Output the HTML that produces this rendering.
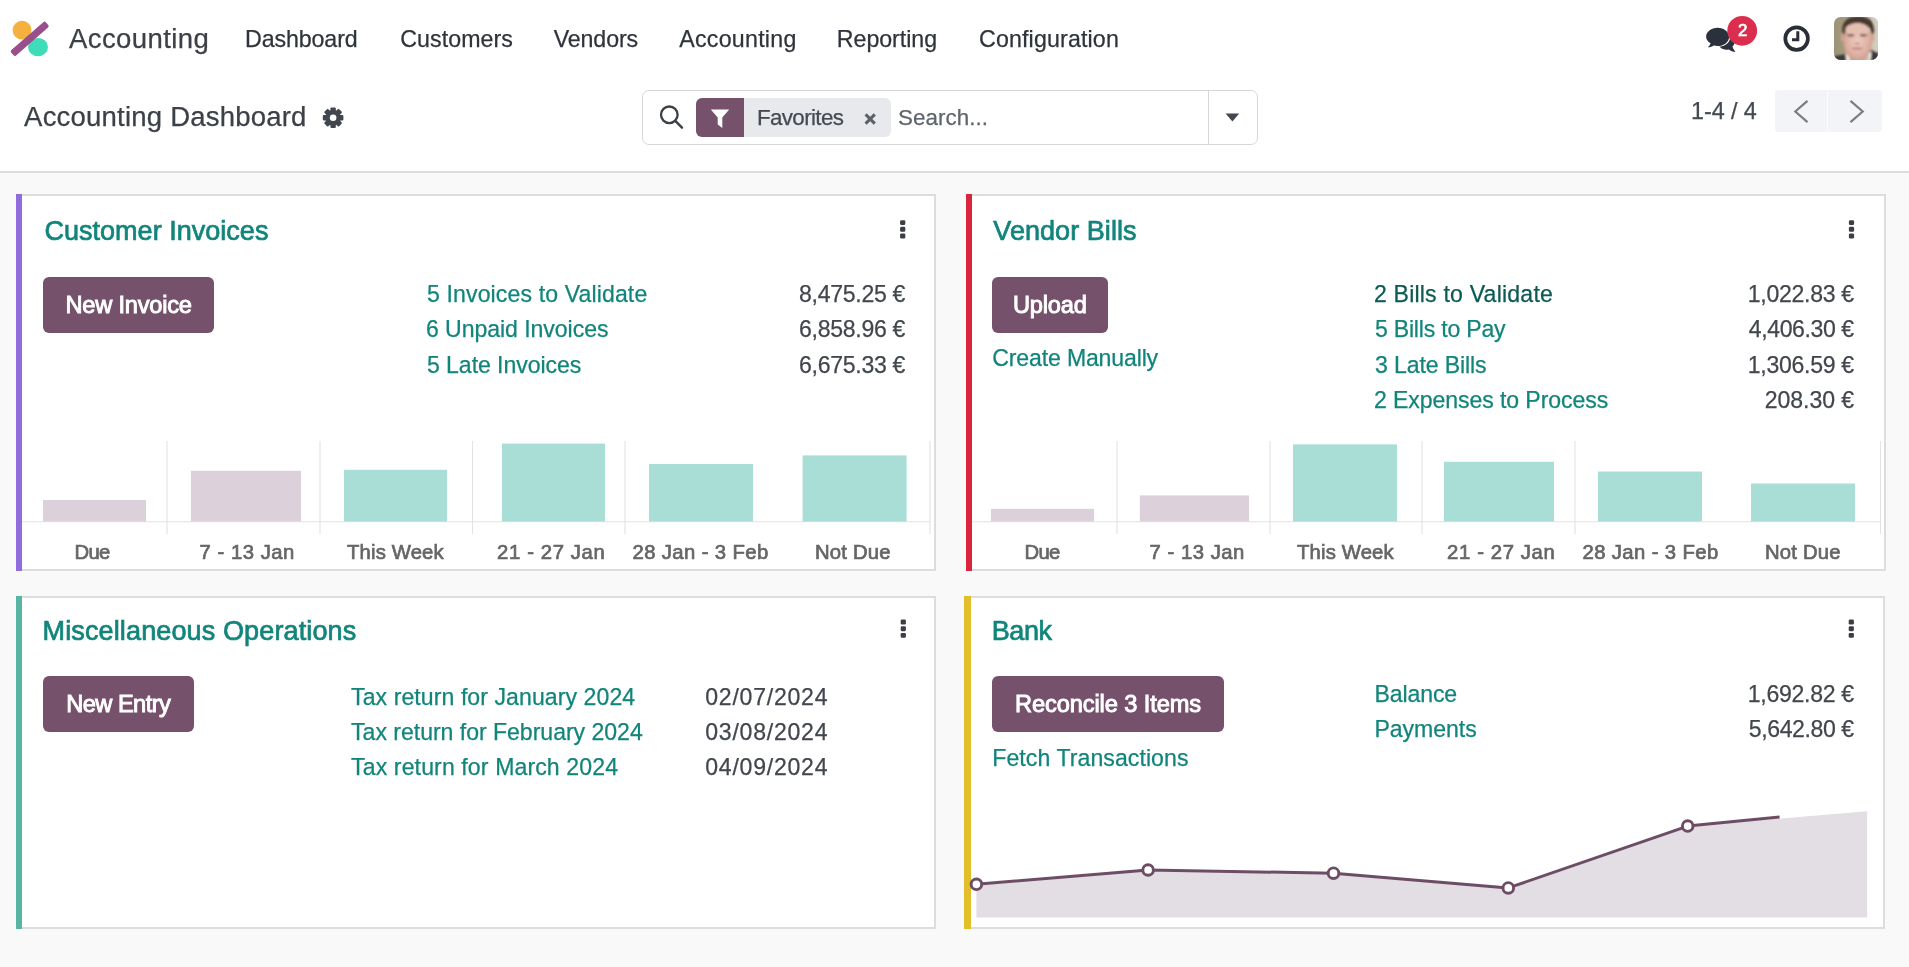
<!DOCTYPE html>
<html lang="en"><head><meta charset="utf-8"><title>Odoo - Accounting Dashboard</title>
<style>
html,body{margin:0;padding:0;}
body{width:1909px;height:967px;overflow:hidden;position:relative;background:#f9f9fa;font-family:"Liberation Sans",sans-serif;}
.abs{position:absolute;}
.t{position:absolute;white-space:nowrap;line-height:0;}
header.top{position:absolute;left:0;top:0;width:1909px;height:171px;background:#fff;border-bottom:2px solid #dcdddf;}
.card{position:absolute;background:#fff;border:2px solid #dcdddf;border-left-width:6px;box-sizing:border-box;}
.card .bar{position:absolute;left:-6px;top:-2px;bottom:-2px;width:6px;display:block;}
.btn{position:absolute;background:#75516c;border-radius:6px;}
.search{position:absolute;left:642px;top:90px;width:616px;height:55px;box-sizing:border-box;border:1.5px solid #d5d7da;border-radius:7px;background:#fff;}
.search .sep{position:absolute;left:564.5px;top:0;width:1.5px;height:100%;background:#d5d7da;}
.facet{position:absolute;left:696px;top:98px;width:195px;height:39px;border-radius:6px;background:#e7e9ed;overflow:hidden;}
.facet i{position:absolute;left:0;top:0;width:48px;height:39px;background:#75516c;display:block;}
.pager{position:absolute;left:1775px;top:90px;width:107px;height:42px;background:#f3f4f7;border-radius:4px;}
.pager b{position:absolute;left:51.5px;top:0;width:1.5px;height:42px;background:#fafbfc;}
svg{position:absolute;overflow:visible;}
.txt{position:absolute;left:0;top:0;width:1909px;height:967px;will-change:transform;}

</style></head>
<body>
<header class="top"></header>

<!-- control panel -->
<div class="search"><div class="sep"></div></div>
<div class="facet"><i></i></div>
<div class="pager"><b></b></div>

<!-- cards -->
<section class="card" style="left:16px;top:194px;width:920px;height:377px;"><i class="bar" style="background:#916cdc"></i></section>
<section class="card" style="left:966px;top:194px;width:920px;height:377px;"><i class="bar" style="background:#d9263e"></i></section>
<section class="card" style="left:16px;top:596px;width:920px;height:333px;"><i class="bar" style="background:#57b5a3"></i></section>
<section class="card" style="left:964px;top:596px;width:921px;height:333px;border-left-width:7px;"><i class="bar" style="background:#e2be2b;left:-7px;width:6.6px"></i></section>

<!-- buttons -->
<div class="btn" style="left:43px;top:277px;width:171px;height:56px;"></div>
<div class="btn" style="left:992px;top:277px;width:116px;height:56px;"></div>
<div class="btn" style="left:43px;top:676px;width:151px;height:56px;"></div>
<div class="btn" style="left:992px;top:676px;width:232px;height:56px;"></div>

<svg width="1909" height="967" viewBox="0 0 1909 967" style="left:0;top:0;">
  <!-- app logo -->
  <g>
    <circle cx="22" cy="30.2" r="9.4" fill="#f5b13f"/>
    <ellipse cx="38" cy="47.1" rx="10" ry="9.2" fill="#3fdcb9"/>
    <rect x="-23" y="-3.600" width="46" height="7.200" rx="1.800" fill="#9a4f8d" transform="translate(29.700 38.850) rotate(-41.200)"/>
  </g>
  <!-- messaging icon -->
  <g fill="#2a303c">
    <path d="M1718 41.5c0-4.2 3.8-7.2 8.2-7.2s8.6 3 8.600 7.200c0 2-.9 3.700-2.300 5 .5 1.900 1.500 3.800 3 5.300-2.600 0-4.900-1-6.600-2.400-.9.200-1.800.3-2.700.3-4.400 0-8.200-3.200-8.200-8.200z"/>
    <path d="M1717.600 27.800c6.300 0 11.500 4.100 11.500 9.100s-5.200 9.100-11.500 9.100c-1.300 0-2.600-.2-3.800-.5-1.600 1.100-3.600 1.800-5.900 1.800 1.300-1.200 2.200-2.600 2.700-4.100-2.800-1.700-4.500-4.100-4.500-6.300 0-5 5.200-9.100 11.500-9.100z" stroke="#fff" stroke-width="2.200" paint-order="stroke"/>
  </g>
  <circle cx="1742.2" cy="30.8" r="14.9" fill="#db2e4e"/>
  <!-- clock -->
  <circle cx="1796.600" cy="38.600" r="11.300" fill="none" stroke="#2a2e37" stroke-width="3.700"/>
  <path d="M1797.800 31.300v8.500h-5.800" fill="none" stroke="#2a2e37" stroke-width="3"/>
  <!-- avatar -->
  <defs>
    <clipPath id="av"><rect x="1834" y="17" width="44" height="43" rx="6.500"/></clipPath>
    <filter id="bl" x="-20%" y="-20%" width="140%" height="140%"><feGaussianBlur stdDeviation="0.900"/></filter>
    <radialGradient id="skin" cx=".5" cy=".45" r=".6"><stop offset="0" stop-color="#ebcbc0"/><stop offset=".6" stop-color="#dfb3a5"/><stop offset="1" stop-color="#c99684"/></radialGradient>
    <linearGradient id="avbg" x1="0" x2="1" y1="0" y2="0">
      <stop offset="0" stop-color="#9a9173"/><stop offset=".45" stop-color="#a9a084"/><stop offset=".8" stop-color="#cfc9b4"/><stop offset="1" stop-color="#b9b196"/>
    </linearGradient>
  </defs>
  <g clip-path="url(#av)">
    <rect x="1830" y="13" width="52" height="51" fill="url(#avbg)"/>
    <g filter="url(#bl)">
      <rect x="1873.500" y="14" width="6" height="40" fill="#d3cfbf"/>
      <path d="M1833 61v-4.500l12.500-2.500 2 7zM1879 61v-8l-8.500-3.500-2 11.500z" fill="#3a3a3b"/>
      <path d="M1845.500 54.500l3.500-3 1 9.500h-3.500zM1868.500 61l.5-10 2.500 1.500-1 8.500z" fill="#f1ece8"/>
      <path d="M1842.500 32c-1.500-9 4-15.500 15-15.800 11-.3 17.500 5 17 14.800l-1.500 8-3-11h-24l-2 9z" fill="#49382f"/>
      <ellipse cx="1842.700" cy="37.500" rx="1.800" ry="4" fill="#d2a292"/>
      <ellipse cx="1872.800" cy="37.500" rx="1.600" ry="4" fill="#d2a292"/>
      <ellipse cx="1857.800" cy="42.300" rx="14.200" ry="19" fill="url(#skin)"/>
      <ellipse cx="1857.300" cy="29.500" rx="11.800" ry="6.500" fill="#e4c0b3"/>
      <ellipse cx="1850.800" cy="35.300" rx="3.500" ry="1.300" fill="#7b564d"/>
      <ellipse cx="1863.300" cy="35.300" rx="3.500" ry="1.300" fill="#7b564d"/>
      <ellipse cx="1857.200" cy="43.500" rx="2.600" ry="1.100" fill="#c39185"/>
      <ellipse cx="1857.300" cy="48.500" rx="5.200" ry="1.100" fill="#b67a74"/>
    </g>
  </g>

  <!-- gear -->
  <g transform="translate(333.100 117.700)" fill="#42464f">
    <g id="gt">
      <rect x="-2.700" y="-10.300" width="5.400" height="20.600" rx="1"/>
      <rect x="-2.700" y="-10.300" width="5.400" height="20.600" rx="1" transform="rotate(45)"/>
      <rect x="-2.700" y="-10.300" width="5.400" height="20.600" rx="1" transform="rotate(90)"/>
      <rect x="-2.700" y="-10.300" width="5.400" height="20.600" rx="1" transform="rotate(135)"/>
    </g>
    <circle r="7.700"/>
    <circle r="3.300" fill="#fff"/>
  </g>

  <!-- search icon -->
  <circle cx="669.300" cy="114.800" r="8.300" fill="none" stroke="#3b4047" stroke-width="2.300"/>
  <line x1="675.300" y1="120.900" x2="682" y2="127.700" stroke="#3b4047" stroke-width="2.400" stroke-linecap="round"/>
  <!-- filter funnel -->
  <path d="M710.800 109.500h18.400l-6.900 8v10.400l-4.600-3.300v-7.100z" fill="#fff"/>
  <!-- facet close x -->
  <path d="M865.600 114.400l9.200 9.200m0-9.200l-9.200 9.200" stroke="#5b6168" stroke-width="3" fill="none"/>
  <!-- dropdown caret -->
  <path d="M1225.600 113.500h13.600l-6.800 8z" fill="#42464f"/>
  <!-- pager chevrons -->
  <path d="M1807.500 100.800l-12.200 10.700 12.200 10.700" fill="none" stroke="#7a7d82" stroke-width="2.200"/>
  <path d="M1850.500 100.800l12.200 10.700-12.200 10.700" fill="none" stroke="#7a7d82" stroke-width="2.200"/>

  <!-- kebabs -->
  <defs>
    <g id="kb"><rect x="-2.600" y="-9.150" width="5.200" height="4.900" rx="1.300"/><rect x="-2.600" y="-2.450" width="5.200" height="4.900" rx="1.300"/><rect x="-2.600" y="4.250" width="5.200" height="4.900" rx="1.300"/></g>
  </defs>
  <use href="#kb" x="902.700" y="229.300" fill="#3b3e42"/>
  <use href="#kb" x="1851.500" y="229.300" fill="#3b3e42"/>
  <use href="#kb" x="903.300" y="628.700" fill="#3b3e42"/>
  <use href="#kb" x="1851.300" y="628.700" fill="#3b3e42"/>

  <!-- chart 1 (customer invoices) -->
  <g stroke="#e2e2e2" stroke-width="1.100">
    <line x1="22" y1="521.800" x2="930" y2="521.800"/>
    <line x1="167" y1="441" x2="167" y2="534"/>
    <line x1="320" y1="441" x2="320" y2="534"/>
    <line x1="472.500" y1="441" x2="472.500" y2="534"/>
    <line x1="625" y1="441" x2="625" y2="534"/>
    <line x1="930" y1="441" x2="930" y2="534"/>
  </g>
  <g fill="#dcd1da">
    <rect x="43" y="500" width="103" height="21.500"/>
    <rect x="191" y="470.800" width="110" height="50.700"/>
  </g>
  <g fill="#a9ded6">
    <rect x="344" y="469.800" width="103" height="51.700"/>
    <rect x="502" y="443.600" width="103" height="77.900"/>
    <rect x="649" y="464" width="104" height="57.500"/>
    <rect x="802.600" y="455.400" width="104" height="66.100"/>
  </g>

  <!-- chart 2 (vendor bills) -->
  <g stroke="#e2e2e2" stroke-width="1.100">
    <line x1="972" y1="521.800" x2="1880" y2="521.800"/>
    <line x1="1117" y1="441" x2="1117" y2="534"/>
    <line x1="1270" y1="441" x2="1270" y2="534"/>
    <line x1="1422" y1="441" x2="1422" y2="534"/>
    <line x1="1575" y1="441" x2="1575" y2="534"/>
    <line x1="1880.500" y1="441" x2="1880.500" y2="534"/>
  </g>
  <g fill="#dcd1da">
    <rect x="991" y="508.800" width="103" height="12.700"/>
    <rect x="1139.800" y="495.400" width="109.200" height="26.100"/>
  </g>
  <g fill="#a9ded6">
    <rect x="1293" y="444.400" width="104" height="77.100"/>
    <rect x="1444" y="461.800" width="110" height="59.700"/>
    <rect x="1598" y="471.500" width="104" height="50"/>
    <rect x="1751" y="483.500" width="104" height="38"/>
  </g>

  <!-- bank line chart -->
  <path d="M976.400 884.300L1148.100 870 1333.500 873.200 1508.300 887.900 1687.700 826.100 1867.100 811.300V917.500H976.400z" fill="#e3dee4"/>
  <path d="M976.400 884.300L1148.100 870 1333.500 873.200 1508.300 887.900 1687.700 826.100 1779.600 816.900" fill="none" stroke="#6d4d66" stroke-width="3" stroke-linejoin="round"/>
  <g fill="#fff" stroke="#6d4d66" stroke-width="2.900">
    <circle cx="976.400" cy="884.300" r="5.300"/>
    <circle cx="1148.100" cy="870" r="5.300"/>
    <circle cx="1333.500" cy="873.200" r="5.300"/>
    <circle cx="1508.300" cy="887.900" r="5.300"/>
    <circle cx="1687.700" cy="826.100" r="5.300"/>
  </g>
</svg>

<div class="txt">
<span class="t" style="left:69.10px;top:39.00px;font-size:27.56px;color:#3c4048;letter-spacing:0.369px;-webkit-text-stroke:0.25px #3c4048;">Accounting</span>
<span class="t" style="left:245.00px;top:39.00px;font-size:23.19px;color:#2f343b;letter-spacing:-0.092px;-webkit-text-stroke:0.25px #2f343b;">Dashboard</span>
<span class="t" style="left:400.20px;top:39.00px;font-size:23.19px;color:#2f343b;letter-spacing:0.074px;-webkit-text-stroke:0.25px #2f343b;">Customers</span>
<span class="t" style="left:553.70px;top:39.00px;font-size:23.19px;color:#2f343b;letter-spacing:-0.099px;-webkit-text-stroke:0.25px #2f343b;">Vendors</span>
<span class="t" style="left:679.30px;top:39.00px;font-size:23.19px;color:#2f343b;letter-spacing:0.252px;-webkit-text-stroke:0.25px #2f343b;">Accounting</span>
<span class="t" style="left:836.80px;top:39.00px;font-size:23.19px;color:#2f343b;letter-spacing:-0.030px;-webkit-text-stroke:0.25px #2f343b;">Reporting</span>
<span class="t" style="left:979.00px;top:39.00px;font-size:23.19px;color:#2f343b;letter-spacing:0.156px;-webkit-text-stroke:0.25px #2f343b;">Configuration</span>
<span class="t" style="left:24.10px;top:117.00px;font-size:27.56px;color:#3c4048;letter-spacing:0.190px;-webkit-text-stroke:0.25px #3c4048;">Accounting Dashboard</span>
<span class="t" style="left:757.00px;top:118.00px;font-size:22.36px;color:#444a52;letter-spacing:-0.634px;-webkit-text-stroke:0.25px #444a52;">Favorites</span>
<span class="t" style="left:898.00px;top:118.00px;font-size:22.36px;color:#5f656c;letter-spacing:0.054px;-webkit-text-stroke:0.25px #5f656c;">Search...</span>
<span class="t" style="left:1691.00px;top:111.00px;font-size:23.4px;color:#444a52;letter-spacing:-0.084px;-webkit-text-stroke:0.25px #444a52;">1-4 / 4</span>
<span class="t" style="left:1737.95px;top:31.00px;font-size:16.95px;color:#fff;letter-spacing:0.000px;-webkit-text-stroke:0.65px #fff;">2</span>
<span class="t" style="left:44.40px;top:231.00px;font-size:27.04px;color:#11857b;letter-spacing:0.011px;-webkit-text-stroke:0.7px #11857b;">Customer Invoices</span>
<span class="t" style="left:65.50px;top:305.00px;font-size:23.61px;color:#fff;letter-spacing:-0.216px;-webkit-text-stroke:0.95px #fff;">New Invoice</span>
<span class="t" style="left:427.00px;top:294.00px;font-size:23.09px;color:#11857b;letter-spacing:0.122px;-webkit-text-stroke:0.25px #11857b;">5 Invoices to Validate</span>
<span class="t" style="left:426.00px;top:329.00px;font-size:23.09px;color:#11857b;letter-spacing:-0.063px;-webkit-text-stroke:0.25px #11857b;">6 Unpaid Invoices</span>
<span class="t" style="left:427.00px;top:365.00px;font-size:23.09px;color:#11857b;letter-spacing:-0.071px;-webkit-text-stroke:0.25px #11857b;">5 Late Invoices</span>
<span class="t" style="left:799.10px;top:294.00px;font-size:23.09px;color:#42464d;letter-spacing:-0.305px;-webkit-text-stroke:0.25px #42464d;">8,475.25 €</span>
<span class="t" style="left:799.10px;top:329.00px;font-size:23.09px;color:#42464d;letter-spacing:-0.305px;-webkit-text-stroke:0.25px #42464d;">6,858.96 €</span>
<span class="t" style="left:799.10px;top:365.00px;font-size:23.09px;color:#42464d;letter-spacing:-0.305px;-webkit-text-stroke:0.25px #42464d;">6,675.33 €</span>
<span class="t" style="left:74.50px;top:552.00px;font-size:20.28px;color:#666;letter-spacing:-0.703px;-webkit-text-stroke:0.7px #666;">Due</span>
<span class="t" style="left:199.50px;top:552.00px;font-size:20.28px;color:#666;letter-spacing:0.527px;-webkit-text-stroke:0.7px #666;">7 - 13 Jan</span>
<span class="t" style="left:347.10px;top:552.00px;font-size:20.28px;color:#666;letter-spacing:0.148px;-webkit-text-stroke:0.7px #666;">This Week</span>
<span class="t" style="left:497.10px;top:552.00px;font-size:20.28px;color:#666;letter-spacing:0.627px;-webkit-text-stroke:0.7px #666;">21 - 27 Jan</span>
<span class="t" style="left:632.50px;top:552.00px;font-size:20.28px;color:#666;letter-spacing:0.384px;-webkit-text-stroke:0.7px #666;">28 Jan - 3 Feb</span>
<span class="t" style="left:815.00px;top:552.00px;font-size:20.28px;color:#666;letter-spacing:0.205px;-webkit-text-stroke:0.7px #666;">Not Due</span>
<span class="t" style="left:993.30px;top:231.00px;font-size:27.04px;color:#11857b;letter-spacing:0.043px;-webkit-text-stroke:0.7px #11857b;">Vendor Bills</span>
<span class="t" style="left:1013.00px;top:305.00px;font-size:23.61px;color:#fff;letter-spacing:-0.197px;-webkit-text-stroke:0.95px #fff;">Upload</span>
<span class="t" style="left:992.30px;top:358.00px;font-size:23.09px;color:#11857b;letter-spacing:-0.157px;-webkit-text-stroke:0.25px #11857b;">Create Manually</span>
<span class="t" style="left:1373.90px;top:294.00px;font-size:23.09px;color:#0b5a53;letter-spacing:0.201px;-webkit-text-stroke:0.25px #0b5a53;">2 Bills to Validate</span>
<span class="t" style="left:1374.90px;top:329.00px;font-size:23.09px;color:#11857b;letter-spacing:-0.205px;-webkit-text-stroke:0.25px #11857b;">5 Bills to Pay</span>
<span class="t" style="left:1374.90px;top:365.00px;font-size:23.09px;color:#11857b;letter-spacing:-0.105px;-webkit-text-stroke:0.25px #11857b;">3 Late Bills</span>
<span class="t" style="left:1373.90px;top:400.00px;font-size:23.09px;color:#11857b;letter-spacing:-0.085px;-webkit-text-stroke:0.25px #11857b;">2 Expenses to Process</span>
<span class="t" style="left:1747.80px;top:294.00px;font-size:23.09px;color:#42464d;letter-spacing:-0.305px;-webkit-text-stroke:0.25px #42464d;">1,022.83 €</span>
<span class="t" style="left:1748.80px;top:329.00px;font-size:23.09px;color:#42464d;letter-spacing:-0.416px;-webkit-text-stroke:0.25px #42464d;">4,406.30 €</span>
<span class="t" style="left:1747.80px;top:365.00px;font-size:23.09px;color:#42464d;letter-spacing:-0.305px;-webkit-text-stroke:0.25px #42464d;">1,306.59 €</span>
<span class="t" style="left:1764.80px;top:400.00px;font-size:23.09px;color:#42464d;letter-spacing:-0.071px;-webkit-text-stroke:0.25px #42464d;">208.30 €</span>
<span class="t" style="left:1024.50px;top:552.00px;font-size:20.28px;color:#666;letter-spacing:-0.703px;-webkit-text-stroke:0.7px #666;">Due</span>
<span class="t" style="left:1149.50px;top:552.00px;font-size:20.28px;color:#666;letter-spacing:0.527px;-webkit-text-stroke:0.7px #666;">7 - 13 Jan</span>
<span class="t" style="left:1297.10px;top:552.00px;font-size:20.28px;color:#666;letter-spacing:0.148px;-webkit-text-stroke:0.7px #666;">This Week</span>
<span class="t" style="left:1447.10px;top:552.00px;font-size:20.28px;color:#666;letter-spacing:0.627px;-webkit-text-stroke:0.7px #666;">21 - 27 Jan</span>
<span class="t" style="left:1582.50px;top:552.00px;font-size:20.28px;color:#666;letter-spacing:0.384px;-webkit-text-stroke:0.7px #666;">28 Jan - 3 Feb</span>
<span class="t" style="left:1765.00px;top:552.00px;font-size:20.28px;color:#666;letter-spacing:0.205px;-webkit-text-stroke:0.7px #666;">Not Due</span>
<span class="t" style="left:42.60px;top:631.00px;font-size:27.04px;color:#11857b;letter-spacing:0.113px;-webkit-text-stroke:0.7px #11857b;">Miscellaneous Operations</span>
<span class="t" style="left:66.20px;top:704.00px;font-size:23.61px;color:#fff;letter-spacing:-0.524px;-webkit-text-stroke:0.95px #fff;">New Entry</span>
<span class="t" style="left:351.10px;top:697.00px;font-size:23.09px;color:#11857b;letter-spacing:0.070px;-webkit-text-stroke:0.25px #11857b;">Tax return for January 2024</span>
<span class="t" style="left:351.10px;top:732.00px;font-size:23.09px;color:#11857b;letter-spacing:-0.031px;-webkit-text-stroke:0.25px #11857b;">Tax return for February 2024</span>
<span class="t" style="left:351.10px;top:767.00px;font-size:23.09px;color:#11857b;letter-spacing:0.112px;-webkit-text-stroke:0.25px #11857b;">Tax return for March 2024</span>
<span class="t" style="left:705.20px;top:697.00px;font-size:23.09px;color:#42464d;letter-spacing:0.759px;-webkit-text-stroke:0.25px #42464d;">02/07/2024</span>
<span class="t" style="left:705.20px;top:732.00px;font-size:23.09px;color:#42464d;letter-spacing:0.759px;-webkit-text-stroke:0.25px #42464d;">03/08/2024</span>
<span class="t" style="left:705.20px;top:767.00px;font-size:23.09px;color:#42464d;letter-spacing:0.759px;-webkit-text-stroke:0.25px #42464d;">04/09/2024</span>
<span class="t" style="left:991.80px;top:631.00px;font-size:27.04px;color:#11857b;letter-spacing:-0.466px;-webkit-text-stroke:0.7px #11857b;">Bank</span>
<span class="t" style="left:1015.00px;top:704.00px;font-size:23.61px;color:#fff;letter-spacing:-0.096px;-webkit-text-stroke:0.95px #fff;">Reconcile 3 Items</span>
<span class="t" style="left:992.30px;top:758.00px;font-size:23.09px;color:#11857b;letter-spacing:0.068px;-webkit-text-stroke:0.25px #11857b;">Fetch Transactions</span>
<span class="t" style="left:1374.50px;top:694.00px;font-size:23.09px;color:#11857b;letter-spacing:-0.127px;-webkit-text-stroke:0.25px #11857b;">Balance</span>
<span class="t" style="left:1374.50px;top:729.00px;font-size:23.09px;color:#11857b;letter-spacing:-0.053px;-webkit-text-stroke:0.25px #11857b;">Payments</span>
<span class="t" style="left:1747.80px;top:694.00px;font-size:23.09px;color:#42464d;letter-spacing:-0.305px;-webkit-text-stroke:0.25px #42464d;">1,692.82 €</span>
<span class="t" style="left:1748.80px;top:729.00px;font-size:23.09px;color:#42464d;letter-spacing:-0.416px;-webkit-text-stroke:0.25px #42464d;">5,642.80 €</span>
</div>

</body></html>
